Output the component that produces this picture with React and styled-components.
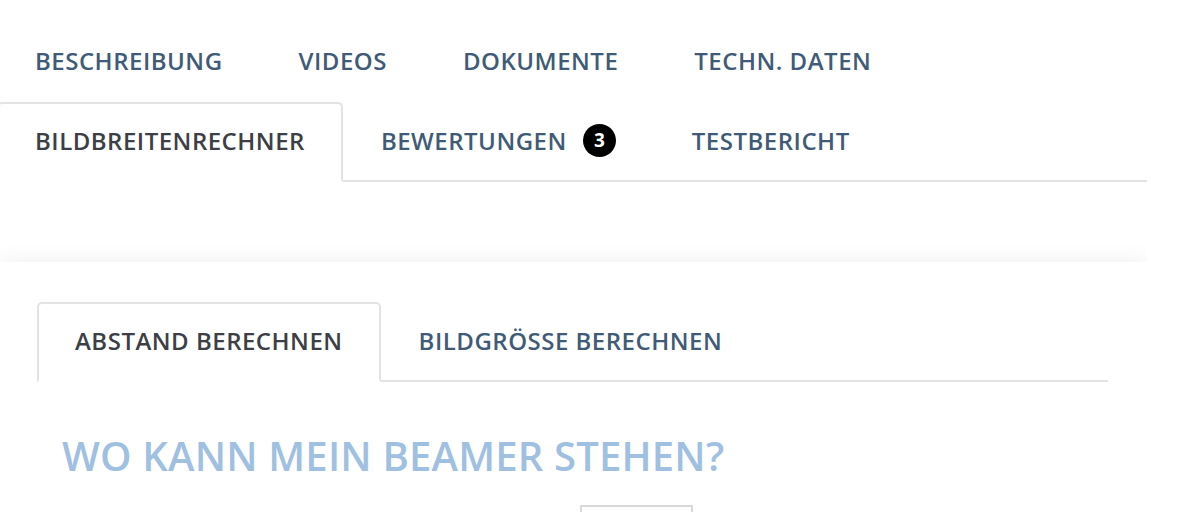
import styled, { createGlobalStyle } from "styled-components";

const GlobalStyle = createGlobalStyle`
  body {
    margin: 0;
    background: #fff;
    font-family: "Open Sans", "Noto Sans", sans-serif;
  }
`;

const Page = styled.div`
  width: 1147px;
  padding-top: 22px;
  overflow: hidden;
  height: 512px;
  box-sizing: border-box;
`;

const TabList = styled.ul`
  display: flex;
  flex-wrap: wrap;
  row-gap: 2px;
  list-style: none;
  margin: 0 0 0 ${(p) => p.$offset || 0}px;
  padding: 0;
  border-bottom: 2px solid #e3e3e3;
`;

const Tab = styled.li`
  display: flex;
  align-items: center;
  gap: 16px;
  box-sizing: border-box;
  height: 80px;
  padding: 0 36px 4px;
  margin-bottom: -2px;
  border: 2px solid transparent;
  border-radius: 5px 5px 0 0;
  font-size: 24px;
  font-weight: 600;
  letter-spacing: 0.5px;
  text-transform: uppercase;
  color: #3f5b78;
  white-space: nowrap;
  cursor: pointer;

  ${(p) =>
    p.$active &&
    `
    color: #3c4046;
    background: #fff;
    border-color: #e3e3e3;
    border-bottom-color: #fff;
  `}
`;

const Badge = styled.span`
  display: inline-flex;
  align-items: center;
  justify-content: center;
  width: 33px;
  height: 33px;
  border-radius: 50%;
  background: #000;
  color: #fff;
  font-size: 19px;
  font-weight: 700;
  letter-spacing: 0;
`;

const Card = styled.section`
  margin-top: 80px;
  background: #fff;
  box-shadow: 0 0 22px rgba(0, 0, 0, 0.07);
  padding: 40px 39px 40px 37px;
`;

const Heading = styled.h2`
  margin: 47px 0 0 25px;
  font-size: 40px;
  font-weight: 600;
  line-height: 54px;
  letter-spacing: 0.2px;
  color: #9fc0e1;
  text-transform: uppercase;
`;

const Figure = styled.div`
  display: flex;
  padding-left: 543px;
  margin-top: 22px;
`;

const Frame = styled.div`
  width: 109px;
  height: 80px;
  border: 2px solid #d9d9d9;
`;

const mainTabs = [
  ["Beschreibung"],
  ["Videos"],
  ["Dokumente"],
  ["Techn. Daten"],
  ["Bildbreitenrechner", true],
  ["Bewertungen", false, 3],
  ["Testbericht"],
];

export default function App() {
  return (
    <>
      <GlobalStyle />
      <Page>
        <TabList $offset={-3}>
          {mainTabs.map(([label, active, count]) => (
            <Tab key={label} $active={active}>
              {label}
              {count && <Badge>{count}</Badge>}
            </Tab>
          ))}
        </TabList>
        <Card>
          <TabList>
            <Tab $active>Abstand berechnen</Tab>
            <Tab>Bildgrösse berechnen</Tab>
          </TabList>
          <Heading>Wo kann mein Beamer stehen?</Heading>
          <Figure>
            <Frame />
          </Figure>
        </Card>
      </Page>
    </>
  );
}
